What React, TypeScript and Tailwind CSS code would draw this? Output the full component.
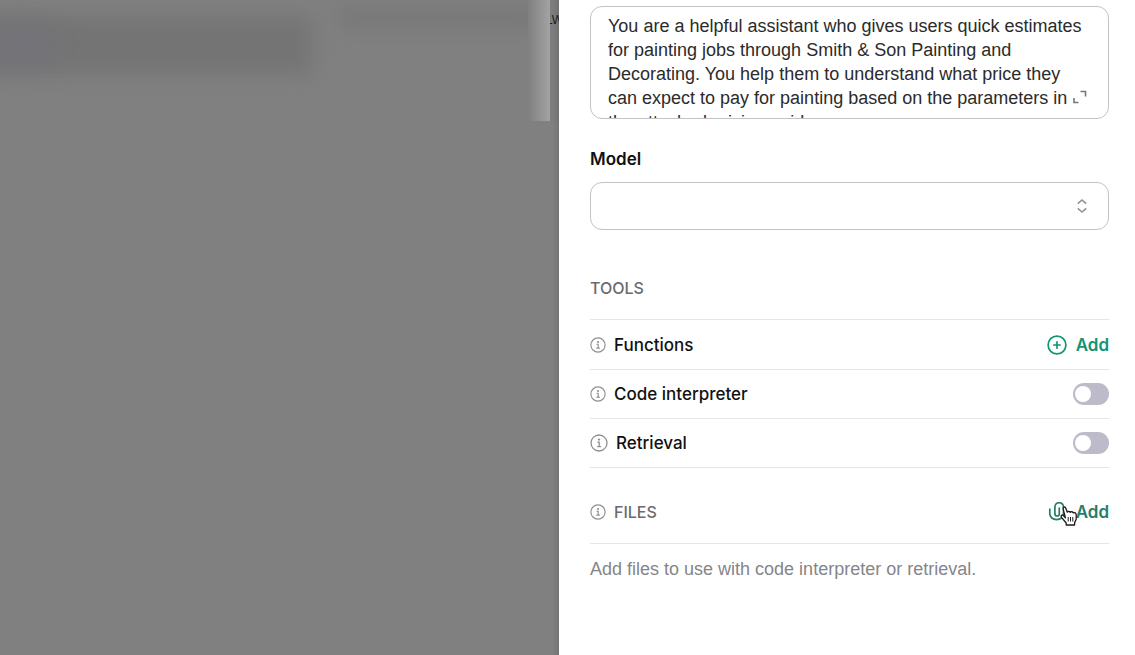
import React, { useState } from "react";

function InfoIcon({ large = false }: { large?: boolean }) {
  return (
    <svg
      viewBox="0 0 18 18"
      className={large ? "size-[18px] shrink-0" : "size-4 shrink-0"}
      fill="none"
      stroke="#8f8f93"
      strokeWidth="1.3"
      strokeLinecap="round"
      aria-hidden="true"
    >
      <circle cx="9" cy="9" r="8" />
      <path d="M7.8 8.2H9.2V12.4M7.6 12.6H10.6" />
      <circle cx="9" cy="5.6" r="0.5" fill="#8f8f93" />
    </svg>
  );
}

function Toggle({ id }: { id: string }) {
  const [on, setOn] = useState(false);
  return (
    <span className="relative flex h-[22px] w-9">
      <input
        id={id}
        type="checkbox"
        role="switch"
        checked={on}
        onChange={() => setOn(!on)}
        className="peer h-full w-full cursor-pointer appearance-none rounded-full bg-[#bdbbc9] checked:bg-[#10a37f]"
      />
      <span className="pointer-events-none absolute top-[3px] left-[2px] size-4 rounded-full bg-white peer-checked:left-[18px]" />
    </span>
  );
}

function ToolSwitch({ id, label, large }: { id: string; label: string; large?: boolean }) {
  return (
    <li className="flex h-[49px] items-center justify-between border-b border-[#e6e6e6]">
      <label htmlFor={id} className="flex items-center gap-2 font-medium">
        <InfoIcon large={large} />
        {label}
      </label>
      <Toggle id={id} />
    </li>
  );
}

function Backdrop() {
  return (
    <div className="relative min-w-0 flex-1 overflow-hidden bg-[#808080]" aria-hidden="true">
      <div className="absolute top-4 -left-5 h-[58px] w-[332px] bg-[#747474] blur-[10px]" />
      <div className="absolute top-6 -left-2 h-10 w-[60px] bg-[#73737a] blur-[12px]" />
      <div className="absolute top-2 right-5 h-5 w-[200px] bg-[#777777] blur-[10px]" />
      <div className="absolute top-0 right-[9px] h-[121px] w-[22px] bg-linear-to-r from-[#808080] to-[#a3a3a3]" />
      <div className="absolute top-0 right-0 h-[121px] w-[9px] overflow-hidden bg-[#7d7d7d]">
        <span className="absolute top-3 -left-1 font-['Liberation_Sans'] text-xs leading-4 text-[#1c1c1c]">LW</span>
      </div>
      <div className="absolute inset-y-0 right-0 w-[6px] bg-linear-to-r from-transparent to-black/10" />
    </div>
  );
}

const instructions =
  "You are a helpful assistant who gives users quick estimates for painting jobs through Smith & Son Painting and Decorating. You help them to understand what price they can expect to pay for painting based on the parameters in the attached pricing guide.";

export default function App() {
  return (
    <div className="flex min-h-screen bg-white font-['Inter','Liberation_Sans',sans-serif] text-[17px] leading-6 text-[#111111]">
      <Backdrop />
      <main className="w-[576px] shrink-0 pt-[6px] pr-[26px] pb-16 pl-[31px]">
        <div className="relative">
          <textarea
            aria-label="Instructions"
            defaultValue={instructions}
            className="block h-[113px] w-full resize-none overflow-hidden rounded-xl border border-[#c3c3c5] bg-white pt-[7px] pr-4 pl-[17px] font-['Liberation_Sans',sans-serif] text-lg leading-6 text-[#2b2b2b] outline-none"
          />
          <button type="button" aria-label="Expand instructions" className="absolute right-[22px] bottom-[14px]">
            <svg viewBox="0 0 16 16" className="size-4" fill="none" stroke="#77777b" strokeWidth="1.6">
              <path d="M9.5 2.5H14.5V7.5M3 9V13.5H7.5" />
            </svg>
          </button>
        </div>

        <label htmlFor="model" className="mt-7 block font-semibold">
          Model
        </label>
        <div className="relative mt-[11px]">
          <select
            id="model"
            defaultValue=""
            className="block h-12 w-full appearance-none rounded-xl border border-[#c3c3c5] bg-white px-4 outline-none"
          >
            <option value="" />
          </select>
          <svg
            viewBox="0 0 12 16"
            className="pointer-events-none absolute top-4 right-[21px] h-4 w-3"
            fill="none"
            stroke="#929296"
            strokeWidth="1.6"
            aria-hidden="true"
          >
            <path d="M1.8 5.6L6 2L10.2 5.6M1.8 10.4L6 14L10.2 10.4" />
          </svg>
        </div>

        <section>
          <h2 className="mt-[46px] text-base leading-6 font-medium text-[#6b6b6e]">TOOLS</h2>
          <ul className="mt-[19px] border-t border-[#e6e6e6]">
            <li className="flex h-[50px] items-center justify-between border-b border-[#e6e6e6]">
              <span className="flex items-center gap-2 font-medium">
                <InfoIcon />
                Functions
              </span>
              <button type="button" className="flex items-center gap-[9px] font-semibold text-[#129472]">
                <svg
                  viewBox="0 0 20 20"
                  className="size-5"
                  fill="none"
                  stroke="currentColor"
                  strokeWidth="1.7"
                  strokeLinecap="round"
                  aria-hidden="true"
                >
                  <circle cx="10" cy="10" r="8.9" />
                  <path d="M10 6.8V13.2M6.8 10H13.2" />
                </svg>
                Add
              </button>
            </li>
            <ToolSwitch id="code-interpreter" label="Code interpreter" />
            <ToolSwitch id="retrieval" label="Retrieval" large />
          </ul>
        </section>

        <section>
          <div className="mt-8 flex h-6 items-center justify-between">
            <h2 className="flex items-center gap-2 text-base font-medium text-[#6b6b6e]">
              <InfoIcon />
              FILES
            </h2>
            <button type="button" className="relative flex items-center gap-[9px] font-semibold text-[#277d67]">
              <svg
                viewBox="0 0 20 20"
                className="size-5"
                fill="none"
                stroke="currentColor"
                strokeWidth="1.7"
                strokeLinecap="round"
                aria-hidden="true"
              >
                <path d="M2.8 7V12.3A7 6.6 0 0 0 16.5 12.3V5.2A4.3 4.6 0 0 0 7.9 5.2V11.5A2.2 2.5 0 0 0 12.3 11.5V6" />
              </svg>
              Add
              <svg viewBox="0 0 20 22" className="absolute top-[5px] left-[12px] h-[22px] w-5" aria-hidden="true">
                <path
                  d="M6.4 12.7L4.2 4.1C3.7 2 6.1 1.2 6.8 3.2L8.3 7.2C9 5.9 10.7 6.1 11.2 7.4C12.2 6.2 13.8 6.7 14.2 7.9C15.6 7.1 17.1 8 17.2 9.8V14.2L15.6 17.6V20H7.2V18L2.5 12.3C1.2 10.4 3.3 9.2 4.7 10.8Z"
                  fill="white"
                  stroke="#1b1b1b"
                  strokeWidth="1.3"
                  strokeLinejoin="round"
                />
                <path d="M9.2 12V16.5M11.5 12V16.5M13.8 12V16.5" fill="none" stroke="#1b1b1b" strokeWidth="1" />
              </svg>
            </button>
          </div>
          <p className="mt-[19px] border-t border-[#e6e6e6] pt-[13px] font-['Liberation_Sans',sans-serif] text-lg leading-6 text-[#85858a]">
            Add files to use with code interpreter or retrieval.
          </p>
        </section>
      </main>
    </div>
  );
}
